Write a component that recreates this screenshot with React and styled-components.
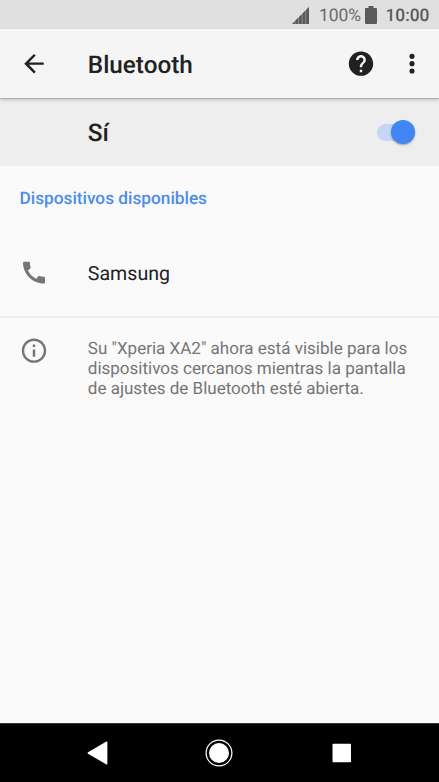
import styled, { createGlobalStyle } from "styled-components";

const GlobalStyle = createGlobalStyle`
  * {
    box-sizing: border-box;
  }
  body {
    margin: 0;
    background: #fafafa;
    font-family: Roboto, "Liberation Sans", sans-serif;
    text-rendering: geometricPrecision;
  }
`;

const Screen = styled.div`
  display: flex;
  flex-direction: column;
  width: 439px;
  height: 782px;
  overflow: hidden;
  background: #fafafa;
  color: #212121;
`;

const StatusBar = styled.div`
  display: flex;
  align-items: center;
  justify-content: flex-end;
  flex: none;
  height: 29px;
  padding: 1px 10px 0 0;
  background: #e0e0e0;

  svg {
    display: block;
    flex: none;
  }
`;

const Percent = styled.span`
  width: 42px;
  margin: 0 4px 0 10.5px;
  padding-top: 2px;
  font-size: 17.5px;
  letter-spacing: -0.1px;
  line-height: 28px;
  color: #6a6a6a;
`;

const Clock = styled.span`
  width: 43.5px;
  margin-left: 8.5px;
  padding-top: 2px;
  font-size: 17.3px;
  font-weight: 500;
  line-height: 28px;
  color: #5a5a5a;
`;

const Toolbar = styled.header`
  display: flex;
  align-items: center;
  flex: none;
  z-index: 1;
  height: 69px;
  padding: 0 12px 0 19px;
  background: #f5f5f5;
  box-shadow: 0 1px 1px rgba(0, 0, 0, 0.16), 0 2px 4px rgba(0, 0, 0, 0.16);
`;

const Title = styled.h1`
  flex: 1;
  margin: 0 0 0 38.8px;
  padding-top: 2px;
  font-size: 24.3px;
  font-weight: 500;
  line-height: 30px;
`;

const Icon = styled.svg`
  display: block;
  flex: none;
  width: 30px;
  height: 29.27px;
  margin-right: ${(props) => props.$gap || "0"};
  fill: ${(props) => props.$color || "#212121"};
`;

const SwitchRow = styled.div`
  display: flex;
  align-items: center;
  justify-content: space-between;
  flex: none;
  height: 68px;
  padding: 0 23.8px 0 87.8px;
  background: #eeeeee;
`;

const SwitchLabel = styled.span`
  padding-top: 1px;
  font-size: 24.4px;
  font-weight: 500;
`;

const Track = styled.div`
  display: flex;
  align-items: center;
  justify-content: flex-end;
  width: 38.4px;
  height: 17px;
  border-radius: 9px;
  background: #c4d6f3;
`;

const Thumb = styled.div`
  flex: none;
  width: 24.4px;
  height: 24.4px;
  border-radius: 50%;
  background: #4285f4;
  box-shadow: 0 1px 2px rgba(0, 0, 0, 0.35);
`;

const Category = styled.h2`
  flex: none;
  height: 63px;
  margin: 0;
  padding: 23px 0 0 19.5px;
  font-size: 17.25px;
  font-weight: 500;
  line-height: 20px;
  color: #4c8cea;
`;

const Device = styled.div`
  display: flex;
  align-items: center;
  flex: none;
  height: 89px;
  padding: 1px 19px 0;
  border-bottom: 2px solid #ededed;
`;

const DeviceName = styled.span`
  margin-left: 38.8px;
  font-size: 19.6px;
`;

const Info = styled.div`
  display: flex;
  align-items: flex-start;
  flex: 1;
  padding: 18px 0 0 19px;
`;

const InfoText = styled.p`
  margin: 3px 0 0 38.8px;
  font-size: 17.03px;
  line-height: 20px;
  white-space: pre-line;
  color: #757575;
`;

const NavBar = styled.nav`
  display: flex;
  align-items: center;
  justify-content: space-between;
  flex: none;
  height: 59px;
  padding: 0 82.5px 0 81.5px;
  border-top: 1px solid #3c3c3c;
  background: #000;

  svg {
    display: block;
    width: 30px;
    height: 30px;
    fill: #fff;
  }
`;

const message =
  'Su "Xperia XA2" ahora está visible para los\ndispositivos cercanos mientras la pantalla\nde ajustes de Bluetooth esté abierta.';

export default function App() {
  return (
    <>
      <GlobalStyle />
      <Screen>
        <StatusBar>
          <svg width="17" height="17" viewBox="0 0 17 17" fill="#5a5a5a">
            <path d="M0 17L17 0V17Z" fill="#8c8c8c" />
            <path d="M0 17L2.5 14.5V17ZM3.4 17V13.6L6 11V17ZM7 17V10L9.6 7.4V17ZM10.6 17V6.4L13.2 3.8V17ZM14.2 17V2.8L17 0V17Z" />
          </svg>
          <Percent>100%</Percent>
          <svg width="12" height="18" viewBox="0 0 12 18" fill="#5a5a5a">
            <path d="M3.5 0H8.5V2H11Q12 2 12 3V17Q12 18 11 18H1Q0 18 0 17V3Q0 2 1 2H3.5Z" />
          </svg>
          <Clock>10:00</Clock>
        </StatusBar>

        <Toolbar>
          <Icon viewBox="0 0 24 24">
            <path d="M20 11H7.83l5.59-5.59L12 4l-8 8 8 8 1.41-1.41L7.83 13H20v-2z" />
          </Icon>
          <Title>Bluetooth</Title>
          <Icon viewBox="0 0 24 24" $gap="21px">
            <path d="M12 2C6.48 2 2 6.48 2 12s4.48 10 10 10 10-4.48 10-10S17.52 2 12 2zm1 17h-2v-2h2v2zm2.07-7.75l-.9.92C13.45 12.9 13 13.5 13 15h-2v-.5c0-1.1.45-2.1 1.17-2.83l1.24-1.26c.37-.36.59-.86.59-1.41 0-1.1-.9-2-2-2s-2 .9-2 2H8c0-2.21 1.79-4 4-4s4 1.79 4 4c0 .88-.36 1.68-.93 2.25z" />
          </Icon>
          <Icon viewBox="0 0 24 24">
            <circle cx="12" cy="6" r="2.1" />
            <circle cx="12" cy="12" r="2.1" />
            <circle cx="12" cy="18" r="2.1" />
          </Icon>
        </Toolbar>

        <SwitchRow>
          <SwitchLabel>Sí</SwitchLabel>
          <Track>
            <Thumb />
          </Track>
        </SwitchRow>

        <Category>Dispositivos disponibles</Category>

        <Device>
          <Icon viewBox="0 0 24 24" $color="#757575">
            <path d="M20.01 15.38c-1.23 0-2.42-.2-3.53-.56-.35-.12-.74-.03-1.01.24l-1.57 1.97c-2.83-1.35-5.48-3.9-6.89-6.83l1.95-1.66c.27-.28.35-.67.24-1.02-.37-1.11-.56-2.3-.56-3.53 0-.54-.45-.99-.99-.99H4.19C3.65 3 3 3.24 3 3.99 3 13.28 10.73 21 20.01 21c.71 0 .99-.63.99-1.18v-3.45c0-.54-.45-.99-.99-.99z" />
          </Icon>
          <DeviceName>Samsung</DeviceName>
        </Device>

        <Info>
          <Icon viewBox="0 0 24 24" $color="#757575">
            <path d="M11 17h2v-6h-2v6zm1-15C6.48 2 2 6.48 2 12s4.48 10 10 10 10-4.48 10-10S17.52 2 12 2zm0 18c-4.41 0-8-3.59-8-8s3.59-8 8-8 8 3.59 8 8-3.59 8-8 8zM11 9h2V7h-2v2z" />
          </Icon>
          <InfoText>{message}</InfoText>
        </Info>

        <NavBar>
          <svg viewBox="0 0 30 30">
            <path d="M6 14.2L24 3.8Q25.4 3 25.4 4.5V25.5Q25.4 27 24 26.2L6 15.8Q5 15 6 14.2Z" />
          </svg>
          <svg viewBox="0 0 30 30">
            <circle cx="15" cy="15" r="12.9" fill="none" stroke="#fff" strokeWidth="1.2" />
            <circle cx="15" cy="15" r="10" />
          </svg>
          <svg viewBox="0 0 30 30">
            <rect x="5.5" y="5.8" width="18.5" height="18.5" rx="0.8" />
          </svg>
        </NavBar>
      </Screen>
    </>
  );
}
